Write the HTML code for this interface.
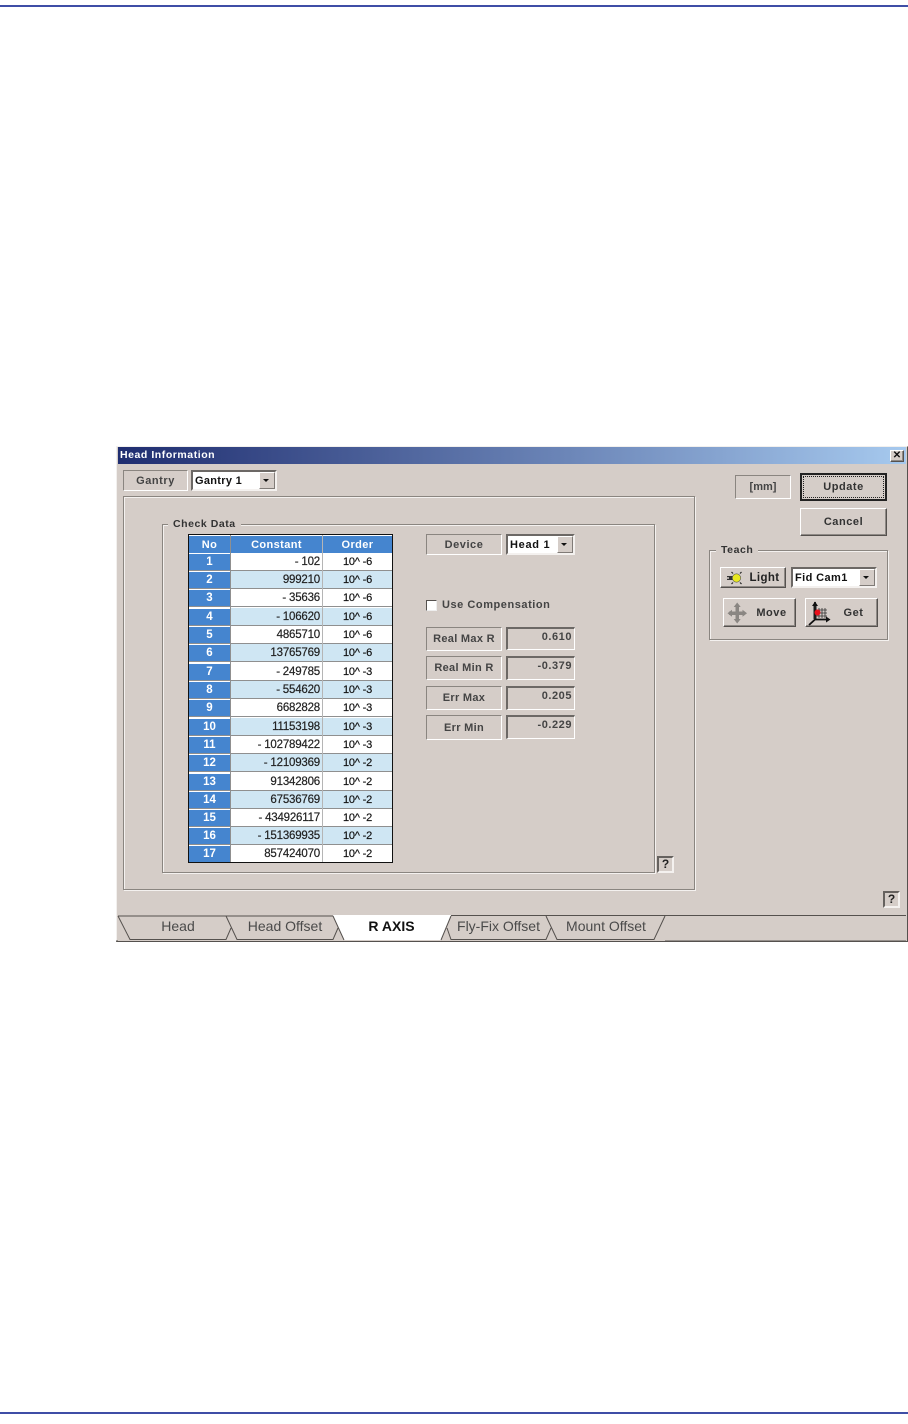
<!DOCTYPE html>
<html><head><meta charset="utf-8"><style>
html,body{margin:0;padding:0;background:#fff}
body{width:908px;height:1424px;position:relative;overflow:hidden;font-family:"Liberation Sans",sans-serif;font-size:11px;color:#2a2a2a;letter-spacing:.55px}
div{position:absolute;box-sizing:border-box;white-space:nowrap}
#d{left:0;top:0;width:908px;height:1424px;filter:blur(.3px)}
.lab{border:1px solid;border-color:#8a8580 #fff #fff #8a8580;display:flex;align-items:center;justify-content:center}
.val{border:1px solid;border-color:#6c6865 #fff #fff #6c6865;border-top-width:2px;border-left-width:2px;text-align:right;padding-right:2px;font-weight:bold;line-height:17px}
.btn{background:#d5cdc8;border:1px solid;border-color:#fff #55514e #55514e #fff;box-shadow:inset -1px -1px 0 #8f8a86;display:flex;align-items:center;justify-content:center;font-weight:bold;color:#333}
.combo{background:#fff;border:2px solid;border-color:#6c6865 #f4f1ef #f4f1ef #6c6865;padding-left:2px;color:#111;line-height:19px;font-weight:bold}
.combo i{position:absolute;right:0;top:0;bottom:0;width:14px;background:#d5cdc8;border:1px solid;border-color:#fff #807b77 #807b77 #fff}
.combo i:after{content:"";position:absolute;left:3px;top:6px;border:3px solid transparent;border-top:3px solid #111;border-bottom:0}
.grp{border:1px solid #8a8580;box-shadow:1px 1px 0 #f4f1ef,inset 1px 1px 0 #f4f1ef}
.leg{background:#d5cdc8;padding:0 5px;height:14px;line-height:14px;color:#333;font-weight:bold;font-size:10.5px}
.help{width:17px;height:17px;background:#d5cdc8;border:2px solid;border-color:#66625f #f4f1ef #f4f1ef #66625f;font-weight:bold;font-size:12px;line-height:13px;text-align:center;color:#222;letter-spacing:0}
.cell{display:flex;align-items:center;height:18px;border-bottom:1px solid #8f8f8f}
.no{left:189px;width:41px;background:#4585cf;color:#fff;font-weight:bold;justify-content:center;border-top:1px solid #fff;border-bottom:1px solid #8f8f8f;font-size:11.5px;letter-spacing:0}
.c{left:231px;width:91px;justify-content:flex-end;padding-right:2px;padding-top:1px;color:#222;letter-spacing:-.2px;font-size:11.5px;-webkit-text-stroke:.2px #222}
.o{left:323px;width:69px;justify-content:center;color:#111;letter-spacing:-.2px;font-size:11px;-webkit-text-stroke:.2px #111}
.h{background:#4585cf;color:#fff;font-weight:bold;padding:0;justify-content:center;font-size:11px;letter-spacing:.4px;border-top:1px solid #fff;border-bottom:0;-webkit-text-stroke:0}
.a{background:#cfe6f3}.b{background:#fff}
</style></head><body>

<div style="left:0;top:5px;width:908px;height:2px;background:#3f4ea6"></div>
<div style="left:0;top:1412px;width:908px;height:2px;background:#3f4ea6"></div>

<div id="d">
<div style="left:116px;top:446px;width:792px;height:496px;background:#d5cdc8;border:1px solid;border-color:#f2f0ee #55514e #55514e #f2f0ee"></div>
<div style="left:118px;top:447px;width:788px;height:17px;background:linear-gradient(90deg,#1f2d70,#a6c9ee);color:#fff;font-weight:bold;font-size:10.5px;line-height:16px;padding-left:2px">Head Information</div>
<div class="btn" style="left:890px;top:450px;width:14px;height:12px;font-size:10px;color:#111;letter-spacing:0;line-height:10px">✕</div>

<div class="lab" style="left:123px;top:470px;width:65px;height:21px;font-weight:bold;color:#444">Gantry</div>
<div class="combo" style="left:191px;top:470px;width:86px;height:21px;letter-spacing:.3px">Gantry 1<i></i></div>

<div class="grp" style="left:123px;top:496px;width:572px;height:394px"></div>
<div class="grp" style="left:162px;top:524px;width:493px;height:349px"></div>
<div class="leg" style="left:168px;top:517px">Check Data</div>

<div style="left:188px;top:534px;width:205px;height:329px;background:#fff;border:1px solid #111"></div>
<div class="cell no h" style="top:535px;height:18px">No</div>
<div class="cell c h" style="top:535px;height:18px;padding:0;left:231px">Constant</div>
<div class="cell o h" style="top:535px;height:18px">Order</div>

<div class="cell no" style="top:553px">1</div><div class="cell c b" style="top:553px">- 102</div><div class="cell o b" style="top:553px">10^ -6</div>
<div class="cell no" style="top:571px">2</div><div class="cell c a" style="top:571px">999210</div><div class="cell o a" style="top:571px">10^ -6</div>
<div class="cell no" style="top:589px">3</div><div class="cell c b" style="top:589px">- 35636</div><div class="cell o b" style="top:589px">10^ -6</div>
<div class="cell no" style="top:608px">4</div><div class="cell c a" style="top:608px">- 106620</div><div class="cell o a" style="top:608px">10^ -6</div>
<div class="cell no" style="top:626px">5</div><div class="cell c b" style="top:626px">4865710</div><div class="cell o b" style="top:626px">10^ -6</div>
<div class="cell no" style="top:644px">6</div><div class="cell c a" style="top:644px">13765769</div><div class="cell o a" style="top:644px">10^ -6</div>
<div class="cell no" style="top:663px">7</div><div class="cell c b" style="top:663px">- 249785</div><div class="cell o b" style="top:663px">10^ -3</div>
<div class="cell no" style="top:681px">8</div><div class="cell c a" style="top:681px">- 554620</div><div class="cell o a" style="top:681px">10^ -3</div>
<div class="cell no" style="top:699px">9</div><div class="cell c b" style="top:699px">6682828</div><div class="cell o b" style="top:699px">10^ -3</div>
<div class="cell no" style="top:718px">10</div><div class="cell c a" style="top:718px">11153198</div><div class="cell o a" style="top:718px">10^ -3</div>
<div class="cell no" style="top:736px">11</div><div class="cell c b" style="top:736px">- 102789422</div><div class="cell o b" style="top:736px">10^ -3</div>
<div class="cell no" style="top:754px">12</div><div class="cell c a" style="top:754px">- 12109369</div><div class="cell o a" style="top:754px">10^ -2</div>
<div class="cell no" style="top:773px">13</div><div class="cell c b" style="top:773px">91342806</div><div class="cell o b" style="top:773px">10^ -2</div>
<div class="cell no" style="top:791px">14</div><div class="cell c a" style="top:791px">67536769</div><div class="cell o a" style="top:791px">10^ -2</div>
<div class="cell no" style="top:809px">15</div><div class="cell c b" style="top:809px">- 434926117</div><div class="cell o b" style="top:809px">10^ -2</div>
<div class="cell no" style="top:827px">16</div><div class="cell c a" style="top:827px">- 151369935</div><div class="cell o a" style="top:827px">10^ -2</div>
<div class="cell no" style="top:845px;height:17px;border-bottom:0">17</div><div class="cell c b" style="top:845px;height:17px;border-bottom:0">857424070</div><div class="cell o b" style="top:845px;height:17px;border-bottom:0">10^ -2</div>
<div style="left:230px;top:535px;width:1px;height:327px;background:#8f8f8f"></div>
<div style="left:322px;top:535px;width:1px;height:327px;background:#b5b5b5"></div>

<div class="lab" style="left:426px;top:534px;width:76px;height:21px;font-weight:bold;color:#444">Device</div>
<div class="combo" style="left:506px;top:534px;width:69px;height:21px;letter-spacing:.7px">Head 1<i></i></div>

<div style="left:426px;top:600px;width:11px;height:11px;background:#fff;border:1px solid;border-color:#55514e #eee #eee #55514e"></div>
<div style="left:442px;top:598px;height:14px;line-height:14px;font-weight:bold;color:#444">Use Compensation</div>

<div class="lab" style="left:426px;top:627px;width:76px;height:24px;font-weight:bold;color:#444;letter-spacing:.3px">Real Max R</div>
<div class="val" style="left:506px;top:627px;width:69px;height:23px;color:#444">0.610</div>
<div class="lab" style="left:426px;top:656px;width:76px;height:24px;font-weight:bold;color:#444;letter-spacing:.3px">Real Min R</div>
<div class="val" style="left:506px;top:656px;width:69px;height:24px;color:#444">-0.379</div>
<div class="lab" style="left:426px;top:686px;width:76px;height:24px;font-weight:bold;color:#444;letter-spacing:.3px">Err Max</div>
<div class="val" style="left:506px;top:686px;width:69px;height:24px;color:#444">0.205</div>
<div class="lab" style="left:426px;top:715px;width:76px;height:25px;font-weight:bold;color:#444;letter-spacing:.3px">Err Min</div>
<div class="val" style="left:506px;top:715px;width:69px;height:24px;color:#444">-0.229</div>

<div class="help" style="left:657px;top:856px">?</div>
<div class="help" style="left:883px;top:891px">?</div>

<div class="lab" style="left:735px;top:475px;width:56px;height:24px;font-weight:bold;color:#444;letter-spacing:0">[mm]</div>
<div class="btn" style="left:800px;top:473px;width:87px;height:28px;border:2px solid #222;box-shadow:none;padding:0">Update</div>
<div style="left:803px;top:476px;width:81px;height:22px;border:1px dotted #222"></div>
<div class="btn" style="left:800px;top:508px;width:87px;height:28px">Cancel</div>

<div class="grp" style="left:709px;top:550px;width:179px;height:90px"></div>
<div class="leg" style="left:716px;top:543px">Teach</div>

<div class="btn" style="left:720px;top:567px;width:66px;height:21px;padding-left:23px;font-size:11.5px;letter-spacing:.4px;color:#222">Light</div>
<div class="combo" style="left:791px;top:567px;width:86px;height:21px;letter-spacing:.4px">Fid Cam1<i></i></div>
<div class="btn" style="left:723px;top:598px;width:73px;height:29px;padding-left:24px">Move</div>
<div class="btn" style="left:805px;top:598px;width:73px;height:29px;padding-left:24px">Get</div>

<svg style="position:absolute;left:0;top:0" width="908" height="1424" viewBox="0 0 908 1424">
 <!-- light bulb -->
 <g>
  <path d="M727 578h6" stroke="#333" stroke-width="4"/>
  <circle cx="728" cy="578" r="1" fill="#d5cdc8"/>
  <circle cx="736.500" cy="578" r="4.200" fill="#e8e820" stroke="#555" stroke-width=".6"/>
  <path d="M733 573.500l-1.500-1.500M740 573.500l1.500-1.500M733 582.500l-1.500 1.500M740 582.500l1.500 1.500" stroke="#222" stroke-width="1.200"/>
 </g>
 <!-- move arrows -->
 <g fill="#8a8682" stroke="none">
  <rect x="735.500" y="605" width="3.500" height="16"/>
  <rect x="729" y="611.500" width="16" height="3.500"/>
  <path d="M737.200 602.500l3.500 4.500h-7zM737.200 623.500l3.500-4.500h-7zM727.500 613.200l4.500-3.500v7zM747 613.200l-4.500-3.500v7z"/>
 </g>
 <!-- get icon -->
 <g fill="none">
  <rect x="813" y="605" width="4" height="14" fill="#777"/>
  <path d="M815 602v18M809 625l6-5.500h14" stroke="#111" stroke-width="1.800"/>
  <path d="M812 606l3-4.500 3 4.500zM826 616.500l4.500 3-4.500 3z" fill="#111"/>
  <path d="M819 608v10M822 608v10M825 608v10M816 610h11M816 613h11M816 616h11" stroke="#333" stroke-width=".8"/>
  <circle cx="817.500" cy="612.500" r="3" fill="#e8101c"/>
 </g>
 <!-- tabs -->
 <path d="M333 915L344 940H441L451 915Z" fill="#fff"/>
 <g fill="none" stroke="#55514e" stroke-width="1">
  <path d="M118 916H333M451 915.500H906"/>
  <path d="M118 916L130 939.500H226L231 928M226 916L237 939.500H333L338 928M333 916L344 940"/>
  <path d="M451 916L441 940M447 928L451 939.500H546L551 928M546 916L557 939.500H654L665 916"/>
  <path d="M665 941H906M116 941H118"/>
 </g>
 <g font-family="Liberation Sans" font-size="14" fill="#4a4a4a" text-anchor="middle" letter-spacing="0">
  <text x="178" y="931">Head</text>
  <text x="285" y="931">Head Offset</text>
  <text x="391.500" y="931" font-weight="bold" fill="#111">R AXIS</text>
  <text x="498.500" y="931">Fly-Fix Offset</text>
  <text x="606" y="931">Mount Offset</text>
 </g>
</svg>
</div>
</body></html>
